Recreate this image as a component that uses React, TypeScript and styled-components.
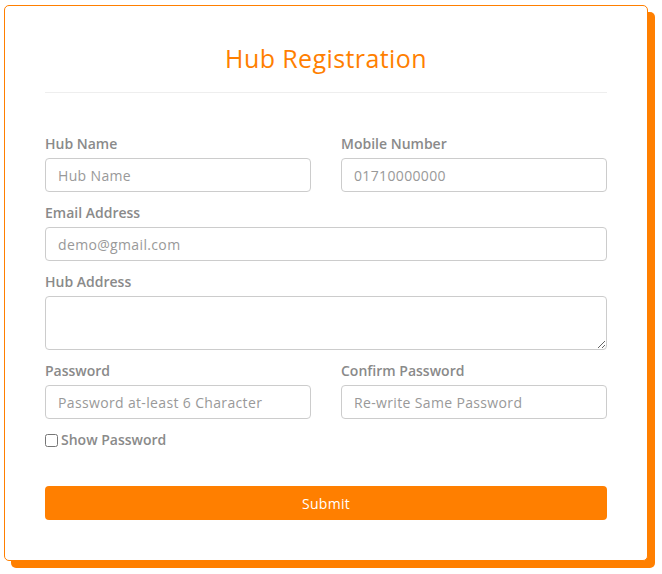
import React from "react";
import styled, { createGlobalStyle } from "styled-components";

const GlobalStyle = createGlobalStyle`
  html, body { margin: 0; padding: 0; background: #fff; }
  html, body, #root { min-height: 100vh; }
  body { font-family: "Open Sans", "Liberation Sans", sans-serif; }
  * { box-sizing: border-box; }
`;

const orange = "#ff7f00";

const Page = styled.div`
  min-height: 100vh;
  padding: 5px 0 14px 4px;
`;

const Card = styled.form`
  width: 644px;
  border: 1px solid ${orange};
  border-radius: 5px;
  box-shadow: 7px 7px 0 ${orange};
  background: #fff;
  padding: 40px;
`;

const Title = styled.h2`
  margin: 0;
  text-align: center;
  color: ${orange};
  font-size: 25px;
  letter-spacing: 0.4px;
  font-weight: 400;
  line-height: 25px;
`;

const Divider = styled.hr`
  margin: 21px 0 40px;
  border: 0;
  border-top: 1px solid #eee;
`;

const Row = styled.div`
  display: grid;
  grid-template-columns: 1fr 1fr;
  column-gap: 30px;
`;

const Group = styled.div`
  display: flex;
  flex-direction: column;
  margin-bottom: 10px;
`;

const Label = styled.label`
  font-size: 14px;
  font-weight: 600;
  color: #8a8a8a;
  line-height: 21px;
  margin-bottom: 4px;
`;

const Input = styled.input`
  height: 34px;
  width: 100%;
  border: 1px solid #ccc;
  border-radius: 4px;
  padding: 0 12px;
  font-family: inherit;
  font-size: 14px;
  letter-spacing: 0.35px;
  color: #555;
  &::placeholder { color: #999; }
`;

const TextArea = styled.textarea`
  height: 54px;
  width: 100%;
  border: 1px solid #ccc;
  border-radius: 4px;
  padding: 6px 12px;
  font-family: inherit;
  font-size: 14px;
  resize: vertical;
  display: block;
`;

const CheckRow = styled.label`
  display: flex;
  align-items: center;
  gap: 3px;
  font-size: 14px;
  font-weight: 600;
  color: #8a8a8a;
  line-height: 20px;
  margin-top: 1px;
`;

const Check = styled.input`
  margin: 0;
  width: 13px;
  height: 13px;
`;

const Submit = styled.button`
  margin-top: 36px;
  width: 100%;
  height: 34px;
  border: 0;
  border-radius: 4px;
  background: ${orange};
  color: #fff;
  font-family: inherit;
  font-size: 14px;
  letter-spacing: 0.3px;
  cursor: pointer;
`;

export default function App() {
  return (
    <>
      <GlobalStyle />
      <Page>
        <Card onSubmit={(e) => e.preventDefault()}>
          <Title>Hub Registration</Title>
          <Divider />
          <Row>
            <Group>
              <Label>Hub Name</Label>
              <Input placeholder="Hub Name" />
            </Group>
            <Group>
              <Label>Mobile Number</Label>
              <Input placeholder="01710000000" />
            </Group>
          </Row>
          <Group>
            <Label>Email Address</Label>
            <Input placeholder="demo@gmail.com" />
          </Group>
          <Group>
            <Label>Hub Address</Label>
            <TextArea />
          </Group>
          <Row>
            <Group>
              <Label>Password</Label>
              <Input type="password" placeholder="Password at-least 6 Character" />
            </Group>
            <Group>
              <Label>Confirm Password</Label>
              <Input type="password" placeholder="Re-write Same Password" />
            </Group>
          </Row>
          <CheckRow>
            <Check type="checkbox" />
            Show Password
          </CheckRow>
          <Submit type="submit">Submit</Submit>
        </Card>
      </Page>
    </>
  );
}
